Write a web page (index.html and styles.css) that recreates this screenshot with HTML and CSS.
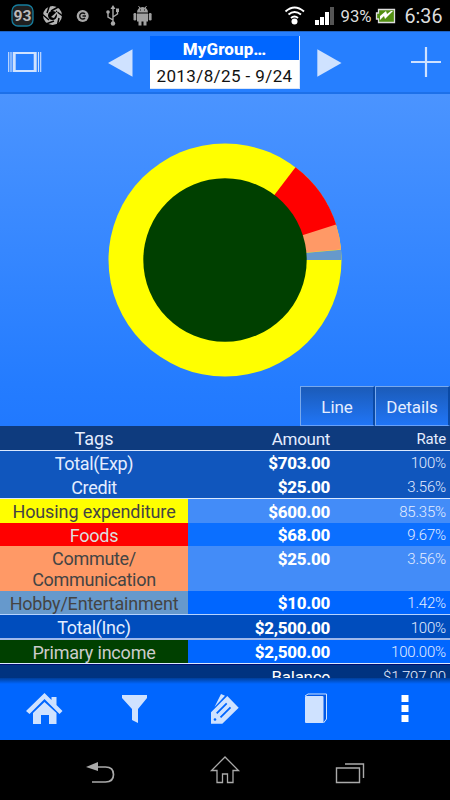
FILE: index.html
```html
<!DOCTYPE html>
<html lang="en">
<head>
<meta charset="utf-8">
<title>MyGroup</title>
<link rel="stylesheet" href="styles.css">
</head>
<body>
<div class="screen">
  <div class="status">
    <svg class="status-left" width="155" height="31" viewBox="0 0 155 31">
      <rect x="12" y="5" width="21" height="21" rx="6" fill="#202020" stroke="#167d9d" stroke-width="1.300"/>
      <text class="badge-num" x="22.500" y="21" text-anchor="middle" textLength="18" lengthAdjust="spacingAndGlyphs">93</text>
      <circle cx="52.500" cy="15.500" r="7" fill="none" stroke="#b5b5b5" stroke-width="5"/>
      <path d="M50 4l-3 9M42 14l7 6M46 24l8-3M57 27l2-9M64 17l-8-6M60 6l-9 5" stroke="#000" stroke-width="1.500"/>
      <path d="M51 17l8-7-5 8z" fill="#b5b5b5"/>
      <circle cx="82.700" cy="16" r="6" fill="#a8a8a8"/>
      <path d="M85 14a3 3 0 1 0 0 4M82.500 16H86" fill="none" stroke="#111" stroke-width="1.400"/>
      <g fill="none" stroke="#aaa" stroke-width="1.400">
        <path d="M113 7v16M113 20l-5-3v-4M113 17l4.500-3v-4"/>
        <g fill="#aaa" stroke="none"><path d="M113 5l2.500 4h-5z"/><circle cx="113" cy="23.500" r="2.200"/><circle cx="108" cy="12" r="1.800"/><path d="M116 8.500h3v3.500h-3z"/></g>
      </g>
      <g fill="#a0a0a0"><path d="M137 12.500a5.500 5.500 0 0 1 11 0zM137 13.500h11v8h-1.500v4h-3v-4h-2v4h-3v-4H137z"/><rect x="133.500" y="13" width="2.800" height="7.500" rx="1.300"/><rect x="148.800" y="13" width="2.800" height="7.500" rx="1.300"/><path d="M138.500 6l2 3M146.500 6l-2 3" stroke="#999"/><path d="M140 10h1M144 10h1" stroke="#111"/></g>
    </svg>
    <svg class="status-right" width="170" height="31" viewBox="280 0 170 31">
      <g fill="none" stroke="#fff" stroke-width="1.900"><path d="M285.500 11.500q9-8 18.500 0M288.500 14.500q6-5 12.500 0M291 18q3.500-3 7 0"/></g>
      <circle cx="294.500" cy="21.500" r="3" fill="#fff"/>
      <path d="M315 20h4v5h-4zM320 17h4v8h-4zM325 12h4v13h-4z" fill="#fff"/><path d="M330 7h4v18h-4z" fill="#555"/>
      <text class="battery-text" x="340.500" y="22" textLength="31" lengthAdjust="spacingAndGlyphs">93%</text>
      <path d="M376.500 13h2V9.500h16V22.500h-16V19h-2z" fill="#528f12" stroke="#ddd" stroke-width="1.300"/>
      <path d="M380 20v-4l6-5 1 3 4-3h2l-8 8-1-3z" fill="#fff"/>
      <text class="clock" x="404.500" y="23" textLength="38" lengthAdjust="spacingAndGlyphs">6:36</text>
    </svg>
  </div>
  <header class="header">
    <svg class="view-icon" width="34" height="20" viewBox="0 0 34 20"><path d="M.7 0v20M3 0v20M30.500 0v20M32.700 0v20" stroke="#cfe2ff" stroke-width="1.100"/><path d="M4.700 0h24v20h-24zM7.700 2v16h18V2z" fill="#cfe2ff" fill-rule="evenodd"/></svg>
    <svg class="prev" width="25" height="28" viewBox="0 0 25 28"><path d="M0 14L24.500.3v27.400z" fill="#cfe2ff"/></svg>
    <div class="period"><div class="group-name"><span>MyGroup…</span></div><div class="dates"><span>2013/8/25 - 9/24</span></div></div>
    <svg class="next" width="25" height="28" viewBox="0 0 25 28"><path d="M.3.3L24.500 14L.3 27.700z" fill="#cfe2ff"/></svg>
    <svg class="plus" width="30" height="30" viewBox="0 0 30 30"><path d="M15 0v30M0 15h30" stroke="#cfe2ff" stroke-width="2.200"/></svg>
  </header>
  <main class="content">
    <section class="chart">
      <svg class="donut" width="234" height="234" viewBox="-117 -117 234 234">
        <circle r="116.500" fill="#ff0"/>
        <path d="M0 0L70.500-92.700A116.500 116.500 0 0 1 111.400-34.600z" fill="#f00"/>
        <path d="M0 0L111-35.500A116.500 116.500 0 0 1 116.100-10.500z" fill="#f96"/>
        <path d="M0 0L116.100-10.300A116.500 116.500 0 0 1 116.500 0z" fill="#69c"/>
        <circle r="81.700" fill="#004000"/>
      </svg>
      <div class="tabs"><div class="tab">Line</div><div class="tab">Details</div></div>
    </section>
    <div class="table">
      <div class="row head"><div class="tag">Tags</div><div class="amount">Amount</div><div class="rate">Rate</div></div>
      <div class="row total"><div class="tag">Total(Exp)</div><div class="amount">$703.00</div><div class="rate">100%</div></div>
      <div class="row total credit"><div class="tag">Credit</div><div class="amount">$25.00</div><div class="rate">3.56%</div></div>
      <div class="row light"><div class="tag housing">Housing expenditure</div><div class="amount">$600.00</div><div class="rate">85.35%</div></div>
      <div class="row foods-row"><div class="tag foods">Foods</div><div class="amount">$68.00</div><div class="rate">9.67%</div></div>
      <div class="row light double"><div class="tag commute">Commute/<br>Communication</div><div class="amount">$25.00</div><div class="rate">3.56%</div></div>
      <div class="row hobby-row"><div class="tag hobby">Hobby/Entertainment</div><div class="amount">$10.00</div><div class="rate">1.42%</div></div>
      <div class="row total income"><div class="tag">Total(Inc)</div><div class="amount">$2,500.00</div><div class="rate">100%</div></div>
      <div class="row primary-row"><div class="tag primary">Primary income</div><div class="amount">$2,500.00</div><div class="rate">100.00%</div></div>
      <div class="row balance"><div class="tag"></div><div class="amount">Balance</div><div class="rate">$1,797.00</div></div>
    </div>
  </main>
  <nav class="toolbar">
    <svg viewBox="0 0 90 62"><g fill="#cfe2ff"><path d="M26 33L44.500 15l7 7v-3h5v8l6 6-3 3-15-15-15 15zM33 35l11.500-11L56.500 35v11H49v-9h-8v9h-8z"/></g></svg>
    <svg viewBox="0 0 90 62"><path d="M32 17h25v3L48 31v14l-6-3V31L32 20z" fill="#cfe2ff"/></svg>
    <svg viewBox="0 0 90 62"><path d="M34.500 29L41 16l4 1.700zM31 34.300L47.300 18 58.700 29.700l-16.400 16H31z" fill="#cfe2ff"/><path d="M36.700 35.300l10-10M40.500 39.300l10-10" stroke="#06f" stroke-width="1.800"/><circle cx="35" cy="41.500" r="1.300" fill="#06f"/></svg>
    <svg viewBox="0 0 90 62"><path d="M35 18l3-2h18.500v25l-3 4" fill="#0059e8" stroke="#cfe2ff"/><rect x="35" y="18" width="18.500" height="27" rx="1" fill="#cfe2ff"/></svg>
    <svg viewBox="0 0 90 62"><path d="M41.500 17h7v7h-7zM41.500 27h7v7h-7zM41.500 37h7v7h-7z" fill="#fff"/></svg>
  </nav>
  <footer class="system">
    <svg viewBox="0 0 150 60"><path d="M96 27h9.500q8 0 8 7.500t-8 7.500H92" fill="none" stroke="#aaa" stroke-width="1.700"/><path d="M86 27l12-5v9z" fill="#aaa"/></svg>
    <svg viewBox="0 0 150 60"><path d="M75 17L61.500 30.500H67V42.500h5.500V34h5v8.500H83V30.500h5.500z" fill="none" stroke="#aaa" stroke-width="1.300"/></svg>
    <svg viewBox="0 0 150 60"><path d="M36.500 28h23v14.500h-23zM45 24h18.500v14" fill="none" stroke="#aaa" stroke-width="1.400"/></svg>
  </footer>
</div>
</body>
</html>
```
FILE: styles.css
```css
* { box-sizing: border-box; }
body { margin: 0; background: #000; font-family: Roboto, "Liberation Sans", sans-serif; color: #e4edff; }
.screen { width: 450px; height: 800px; display: flex; flex-direction: column; overflow: hidden; }
svg { display: block; flex: none; }
.status { height: 31px; display: flex; justify-content: space-between; }
.badge-num { font-size: 15px; font-weight: 700; fill: #bbb; }
.battery-text { font-size: 16px; fill: #ddd; }
.clock { font-size: 21px; fill: #ddd; }
.header { height: 63px; background: #267fff; border-top: 1px solid #2164c4; border-bottom: 2px solid #1c70e9; display: flex; align-items: flex-start; }
.view-icon { margin: 20px 0 0 8px; }
.prev { margin: 17px 0 0 66px; }
.period { width: 150px; height: 53px; margin: 4px 0 0 17px; background: #fff; border: 1px solid #dce7f9; border-width: 0 1px 1px 0; text-align: center; }
.group-name { height: 24px; background: #06f; color: #fff; font-size: 17px; line-height: 26px; font-weight: 800; letter-spacing: .1px; }
.dates { height: 28px; color: #111; font-size: 17px; line-height: 32px; white-space: nowrap; letter-spacing: .4px; }
.next { margin: 17px 0 0 17px; }
.plus { margin: 15px 0 0 69px; }
.content { height: 584px; overflow: hidden; background: linear-gradient(#4b94ff 0, #247cff 290px, #1b74ff 400px, #06f 510px); }
.chart { height: 332px; display: flex; flex-direction: column; justify-content: space-between; align-items: center; padding-top: 49px; }
.tabs { width: 150px; height: 40px; display: flex; align-self: flex-end; }
.tab { width: 75px; border: 1px solid #78a9ed; border-right: 2px solid #0b4aa5; border-bottom: 1px solid #67a1fa; background: linear-gradient(#1b5bb8, #2075f6); font-size: 17px; letter-spacing: -.1px; line-height: 40px; text-align: center; }
.row { display: flex; height: 24px; line-height: 24px; background: #0b6fff; }
.tag { width: 188px; text-align: center; font-size: 18px; letter-spacing: -.2px; white-space: nowrap; }
.amount { width: 142px; text-align: right; font-size: 17px; letter-spacing: -.3px; font-weight: 800; color: #fff; }
.rate { width: 120px; padding-right: 4px; text-align: right; font-size: 15px; letter-spacing: -.2px; font-weight: 300; }
.row.head { height: 25px; line-height: 26px; background: #0e3b7e; border-bottom: 1px solid #dbe9ff; }
.head .amount { font-weight: 400; color: #e4edff; }
.head .tag { letter-spacing: 0; }
.head .rate { font-weight: 400; }
.row.total { background: #1056bd; line-height: 25px; }
.total .tag { letter-spacing: -.35px; }
.row.credit { border-bottom: 1px solid #dbe9ff; }
.row.light { background: #438cf8; line-height: 26px; }
.light .tag.housing { letter-spacing: -.1px; line-height: 25px; }
.row.foods-row { height: 23px; line-height: 25px; }
.row.double { height: 45px; line-height: 26px; }
.housing { background: #ff0; color: #444; }
.foods { background: #f00; color: #ddd; }
.double .commute { background: #f96; color: #444; line-height: 21px; padding-top: 2px; letter-spacing: -.3px; }
.hobby { background: #69c; color: #444; }
.row.hobby-row { line-height: 25px; background: #06f; border-bottom: 1px solid #b5d3ff; }
.row.income { height: 25px; line-height: 26px; background: #004dbd; border-bottom: 2px solid #9fb9ec; }
.row.primary-row { line-height: 25px; border-bottom: 1px solid #dbe9ff; background: #06f; }
.primary { background: #004000; color: #ccc; }
.row.balance { background: #003380; border-top: 1px solid #000e70; }
.balance .amount { font-weight: 400; }
.toolbar { height: 62px; background: linear-gradient(#003f9b, #06f 6px); display: flex; }
.toolbar svg { width: 90px; height: 62px; }
.system { height: 60px; background: #000; display: flex; }
.system svg { width: 150px; height: 60px; }
```
